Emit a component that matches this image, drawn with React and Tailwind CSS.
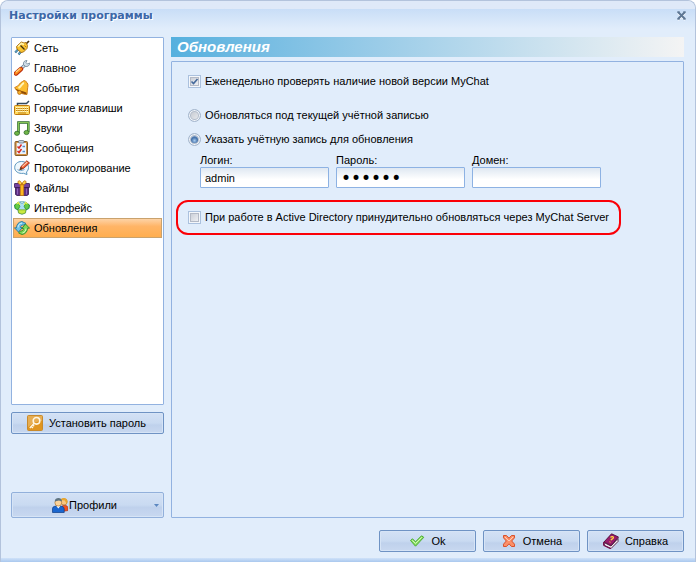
import React, { useState } from 'react';
import clsx from 'clsx';

const NetworkIcon = () => (
  <svg viewBox="0 0 16 16" className="w-4 h-4 shrink-0">
    <path d="M1.200 12.500 4 9.500M4.500 14.500 7 11.500" stroke="#2f6d92" strokeWidth="2.200" />
    <path d="M1.500 12 4 9.500M4.800 14 7 11.500" stroke="#7fc0dd" strokeWidth="0.900" />
    <path d="M11.500 4.500 15 1" stroke="#4a3314" strokeWidth="1.700" />
    <path d="M2.500 6.500 5.500 3.500 7.500 2 10 3 12 2.500 13.500 5.500 13 8.500 9.500 12 7 12.500 3 9Z" fill="#f9c432" stroke="#a1690f" strokeWidth="0.900" />
    <path d="M4 6.500 7.500 3.500 10 4.500" stroke="#fff2b0" strokeWidth="1.600" fill="none" />
    <path d="M6.500 5.500 10.500 9.500" stroke="#3d2b0c" strokeWidth="1.200" />
    <path d="M10.500 5.500 12 7" stroke="#b87712" />
  </svg>
);

const ToolsIcon = () => (
  <svg viewBox="0 0 16 16" className="w-4 h-4 shrink-0">
    <path d="M7 8.500 11 5" stroke="#6f8597" strokeWidth="3" />
    <path d="M7 8.500 11 5" stroke="#dbe7ef" strokeWidth="1.500" />
    <path d="M9.500 4.500C9 2 10.500 .5 13 .5L12 2.500 13.500 4 15.700 3C15.900 5.500 13.500 7.200 11.300 6.300Z" fill="#cfdde8" stroke="#6f8597" strokeWidth="0.800" />
    <path d="M2 13.500 7 9" stroke="#b8290a" strokeWidth="4.400" strokeLinecap="round" />
    <path d="M2 13.200 6.800 8.900" stroke="#fb8a1e" strokeWidth="2.800" strokeLinecap="round" />
    <path d="M2 12 6 8.600" stroke="#ffd98a" strokeWidth="1.100" />
  </svg>
);

const BellIcon = () => (
  <svg viewBox="0 0 16 16" className="w-4 h-4 shrink-0">
    <path d="M.7 7.500C5 6.500 5.500 2.500 8.500 1.500 9.500.3 11.500.3 12 1.700 14 3 14.300 5 13.700 7.500 13 10 13.500 12 13 14.500 9 14.500 2.500 12 .7 7.500Z" fill="#fcbd2f" stroke="#c9740c" strokeWidth="0.900" />
    <path d="M4.500 8C7.500 6.500 7.500 3.700 10 3" stroke="#fff3b8" strokeWidth="2" fill="none" />
    <path d="M1.500 8.800C3 11.500 8 13.800 12.500 14.200L12.300 12.500C9 11 5 10.500 1.500 8.800Z" fill="#8e4a06" />
    <circle cx="5.500" cy="12.500" r="1.900" fill="#f8b02a" stroke="#a35a08" strokeWidth="0.700" />
  </svg>
);

const KeyboardIcon = () => (
  <svg viewBox="0 0 16 16" className="w-4 h-4 shrink-0">
    <path d="M3.500 5V3.500H12.500L15 1" stroke="#33495c" strokeWidth="1.500" fill="none" />
    <rect x="0.500" y="5.500" width="15" height="9" rx="1" fill="#ffd95e" stroke="#c07a0c" />
    <path d="M2 7.500H14M2 9.500H14M2 11.500H14" stroke="#fff8cf" strokeDasharray="1.500 0.700" />
    <path d="M2 8.500H14M2 10.500H14" stroke="#b8760f" strokeWidth="0.900" strokeDasharray="1.500 0.700" />
    <path d="M4 13H12" stroke="#b8760f" strokeWidth="0.900" />
  </svg>
);

const MusicIcon = () => (
  <svg viewBox="0 0 16 16" className="w-4 h-4 shrink-0">
    <path d="M4.500 13V2.500H14.300V12" fill="none" stroke="#2e6a2b" strokeWidth="2.600" />
    <path d="M4.500 13V2.500H14.300V12" fill="none" stroke="#86c655" strokeWidth="1.200" />
    <ellipse cx="3" cy="13.300" rx="2.500" ry="2.100" fill="#6fb545" stroke="#2e6a2b" strokeWidth="0.800" />
    <ellipse cx="12.500" cy="12.500" rx="2.500" ry="2.100" fill="#6fb545" stroke="#2e6a2b" strokeWidth="0.800" />
  </svg>
);

const ClipboardIcon = () => (
  <svg viewBox="0 0 16 16" className="w-4 h-4 shrink-0">
    <rect x="1" y="1.500" width="12.500" height="14" rx="1" fill="#d39447" stroke="#865b28" />
    <rect x="2.700" y="3" width="9.300" height="11" fill="#eaf3ff" />
    <rect x="4.500" y="0.500" width="5.500" height="2.500" rx="1" fill="#c6d2de" stroke="#5c6b7c" strokeWidth="0.700" />
    <path d="M3.500 6.500 5 8 7.500 4.500M3.500 11 5 12.500 7.500 9" stroke="#d82a25" strokeWidth="1.500" fill="none" />
    <path d="M8.500 6.500H11M8.500 11.500H11" stroke="#5b8cc4" strokeWidth="1.300" />
  </svg>
);

const LogIcon = () => (
  <svg viewBox="0 0 16 16" className="w-4 h-4 shrink-0">
    <path d="M7.500 1.500C11.500 1.500 14.500 4 14.500 7.500 14.500 9.500 13.500 11 12.500 12L13 14.500 9.500 13.300C4.500 14 .7 11.500.7 7.500.7 4 3.500 1.500 7.500 1.500Z" fill="#eef7fd" stroke="#5a95bd" />
    <path d="M3.500 9.500C5.500 11 7.500 11 10.500 9.500" stroke="#79aace" fill="none" />
    <path d="M6 9.500 7 6.500 12.800.8 15.500 3 9.500 8.500Z" fill="#ee5a2c" stroke="#8f2310" strokeWidth="0.800" />
    <path d="M8.300 6.600 13.300 2" stroke="#ffd0b0" strokeWidth="1.100" />
    <path d="M5.300 10.300 6.800 7 8.800 8.900Z" fill="#5f4127" />
  </svg>
);

const GiftIcon = () => (
  <svg viewBox="0 0 16 16" className="w-4 h-4 shrink-0">
    <path d="M1.500 7H14.500V14.500L13 15.500H3L1.500 14.500Z" fill="#592b80" stroke="#351650" strokeWidth="0.800" />
    <rect x="0.400" y="3.500" width="15.200" height="4" rx="0.500" fill="#7342a0" stroke="#351650" strokeWidth="0.800" />
    <path d="M3.500 8.500V14.500M12.500 8.500V14.500" stroke="#8e62b8" strokeWidth="1.200" />
    <path d="M6.300 3.500H9.700V15.600H6.300Z" fill="#fdb91f" stroke="#c2720b" strokeWidth="0.600" />
    <path d="M8 4.800C5 4.800 3 2.800 4.500 1 6 .2 7.500 2.200 8 4.800 8.500 2.200 10 .2 11.500 1 13 2.800 11 4.800 8 4.800Z" fill="#ffd94f" stroke="#c2720b" strokeWidth="0.900" />
  </svg>
);

const InterfaceIcon = () => (
  <svg viewBox="0 0 16 16" className="w-4 h-4 shrink-0">
    <path d="M5 2H11L15.500 5 15 8.500 12 10 11.500 13 8 14.200 4.500 13 4 10 1 8.500.5 5Z" fill="#a9ddf4" stroke="#4a97a8" strokeWidth="0.800" strokeLinejoin="round" />
    <path d="M4.500 2.300.6 5 1.200 8.300 4 9.800 5.800 6.500ZM11.500 2.300 15.400 5 14.800 8.300 12 9.800 10.200 6.500Z" fill="#62cb45" stroke="#2b8f2b" strokeWidth="0.800" />
    <path d="M2.500 4 4.500 2.500 6 5M13.500 4 11.500 2.500 10 5" stroke="#e9f052" strokeWidth="1.200" fill="none" />
    <path d="M4.200 9.800H11.800L11.300 13 8 14.100 4.700 13Z" fill="#c9e941" stroke="#6fa320" strokeWidth="0.700" />
    <path d="M6 2C6.500 4 9.500 4 10 2Z" fill="#eaf8ff" stroke="#4a97a8" strokeWidth="0.600" />
  </svg>
);

const RefreshIcon = () => (
  <svg viewBox="0 0 16 16" className="w-4 h-4 shrink-0">
    <path d="M8 1.500 12 3.500 10 5C7.500 4.700 6.500 6 6.500 7.500H8.500L4.500 12 .5 7.800H2.500C2.500 4.500 4.500 2 8 1.500Z" fill="#6fc3ea" stroke="#22779b" strokeWidth="0.900" strokeLinejoin="round" />
    <path d="M8 14.500 4.500 13 6.500 11C8.500 11.300 9.500 10 9.500 8.500H7.800L11.500 4 15.500 8.200H13.500C13.500 11.500 11.500 14 8 14.500Z" fill="#7ed957" stroke="#2b8a2f" strokeWidth="0.900" strokeLinejoin="round" />
    <path d="M4 7.500C4 5 5.500 3.500 8 3" stroke="#d6f1fc" fill="none" />
    <path d="M12 8.500C12 10.800 10.500 12.500 8.500 13" stroke="#dcf8cb" fill="none" />
  </svg>
);

const KeyIcon = () => (
  <svg viewBox="0 0 16 16" className="w-4 h-4 shrink-0">
    <rect x="0.500" y="0.500" width="15" height="15" rx="1" fill="#e0951f" stroke="#c98a2b" />
    <path d="M1 1H15V6C10 6 5 8 1 12Z" fill="#e6ad52" />
    <circle cx="9.500" cy="5.800" r="3.300" fill="none" stroke="#fff6e2" strokeWidth="1.600" />
    <path d="M7.200 8.300 2.800 13M4.300 11.500 6 13M5.800 10 7.200 11.300" stroke="#fff6e2" strokeWidth="1.400" fill="none" />
  </svg>
);

const UsersIcon = () => (
  <svg viewBox="0 0 16 16" className="w-4 h-4 shrink-0">
    <path d="M10 14.500V9C13 7.500 16 8.500 16 11.500V13.500Z" fill="#f2501f" stroke="#a62b0d" strokeWidth="0.600" />
    <circle cx="12" cy="4.800" r="3.200" fill="#f8c782" stroke="#a66a1e" strokeWidth="0.600" />
    <path d="M8.500 3C9 .3 14.800-.2 15.500 4L14.800 7 12.800 3.500Z" fill="#e9a72e" />
    <path d="M.5 15.500V11.500C.5 9.500 3 9 6.300 9S12.200 9.500 12.200 12V15.500Z" fill="#1a66cf" stroke="#0b3c87" strokeWidth="0.700" />
    <path d="M4.300 9 6.300 11.500 8.300 9Z" fill="#fff" />
    <circle cx="6.300" cy="5.700" r="3.400" fill="#fcd49b" stroke="#a66a1e" strokeWidth="0.600" />
    <path d="M2.800 4.500C2.500.2 10-.2 10 4.500L7 3.500Z" fill="#5f7480" />
  </svg>
);

const OkIcon = () => (
  <svg viewBox="0 0 16 16" className="w-4 h-4 shrink-0">
    <path d="M1.500 7.500 3.500 5.800 6.500 8.800 12.500 2.800 14.800 4.300 6.500 13.200Z" fill="#8be062" stroke="#4aab35" strokeLinejoin="round" />
    <path d="M3.300 7.300 6.500 10.500 12.700 4.300" stroke="#d3fab8" fill="none" />
  </svg>
);

const CancelIcon = () => (
  <svg viewBox="0 0 16 16" className="w-4 h-4 shrink-0">
    <path d="M2.500 2.500H5.500L8 5.200 10.500 2.500H13.500V4.800L10.700 8 13.500 11.200V13.500H10.500L8 10.800 5.500 13.500H2.500V11.200L5.300 8 2.500 4.800Z" fill="#fb8f68" stroke="#d9502a" strokeLinejoin="round" />
    <path d="M4 4 8 8 12 4" stroke="#ffcbb2" fill="none" />
  </svg>
);

const BookIcon = () => (
  <svg viewBox="0 0 16 16" className="w-4 h-4 shrink-0">
    <path d="M1 9.500 8 13 15 5.500V8.500L8 15.500 1.500 12.500Z" fill="#f3edf2" stroke="#4d1239" strokeWidth="0.900" />
    <path d="M1 9 8.500 .8 15.500 4 8 12.500Z" fill="#991b6b" stroke="#4f0e39" strokeWidth="0.900" />
    <path d="M1 9C0 11 .5 12.500 2 13L8 15.800" stroke="#75104f" strokeWidth="1.300" fill="none" />
    <path d="M7.500 4.500C8.500 3 11 3.500 10.300 5 9.900 6 8.500 5.700 8 7.300M7.200 8.700 6.800 9.300" stroke="#ffd83f" strokeWidth="1.300" fill="none" />
  </svg>
);

const sections = [
  { id: 'network', label: 'Сеть', Icon: NetworkIcon },
  { id: 'main', label: 'Главное', Icon: ToolsIcon },
  { id: 'events', label: 'События', Icon: BellIcon },
  { id: 'hotkeys', label: 'Горячие клавиши', Icon: KeyboardIcon },
  { id: 'sounds', label: 'Звуки', Icon: MusicIcon },
  { id: 'messages', label: 'Сообщения', Icon: ClipboardIcon },
  { id: 'logging', label: 'Протоколирование', Icon: LogIcon },
  { id: 'files', label: 'Файлы', Icon: GiftIcon },
  { id: 'interface', label: 'Интерфейс', Icon: InterfaceIcon },
  { id: 'updates', label: 'Обновления', Icon: RefreshIcon },
];

const buttonStyle =
  'flex items-center justify-center border rounded-[2px] bg-[linear-gradient(#d3e1f5,#c9daf1_50%,#bfd1ec_60%,#c8d8f0)] shadow-[inset_0_0_0_1px_#d6e4f6]';

const DialogButton = ({ Icon, children }) => (
  <button className={clsx(buttonStyle, 'w-[97px] h-[22px] gap-[6px] border-[#6f93c4]')}>
    <Icon />
    {children}
  </button>
);

const Checkbox = ({ checked, onChange, children }) => (
  <label className="flex items-center gap-1 h-4">
    <span className="relative w-[13px] h-[13px] shrink-0">
      <input
        type="checkbox"
        checked={checked}
        onChange={onChange}
        className="block appearance-none w-[13px] h-[13px] border border-[#abc1de] bg-linear-to-br from-[#c3c8d2] to-[#f7f8fa] shadow-[inset_0_0_0_1px_#f4f7fb,inset_0_0_0_2px_#b4bac6]"
      />
      {checked && (
        <svg viewBox="0 0 13 13" className="absolute inset-0 pointer-events-none">
          <path d="M3.500 6.500 5.500 8.500 9.500 4" stroke="#44699b" strokeWidth="1.600" fill="none" />
        </svg>
      )}
    </span>
    {children}
  </label>
);

const Radio = ({ checked, onChange, children }) => (
  <label className="flex items-center gap-1 h-4">
    <input
      type="radio"
      name="account"
      checked={checked}
      onChange={onChange}
      className={clsx(
        'appearance-none w-[13px] h-[13px] shrink-0 rounded-full border border-[#a3b5cc] shadow-[inset_0_0_0_1px_#f1f5fa,inset_0_0_0_2px_#b3bdcb]',
        checked
          ? 'bg-[radial-gradient(circle_at_50%_60%,#a9cdf0_0,#4673ab_3px,#5f86b8_4px,#d4dfec_5px)]'
          : 'bg-linear-to-br from-[#bfc4cc] to-[#eef0f3]'
      )}
    />
    {children}
  </label>
);

const Field = ({ label, type = 'text', ...props }) => (
  <label className="flex flex-col w-[129px]">
    <span className="h-[13px] leading-[13px]">{label}</span>
    <input
      type={type}
      {...props}
      className={clsx(
        'w-full h-[21px] px-1 border border-[#8db2e3] rounded-[1px] bg-linear-to-b from-[#dfe8f2] to-white to-60% outline-none',
        type === 'password' && "text-[17px] font-['DejaVu_Sans',sans-serif]"
      )}
    />
  </label>
);

const App = () => {
  const [active, setActive] = useState('updates');
  const [weekly, setWeekly] = useState(true);
  const [account, setAccount] = useState('custom');
  const [forced, setForced] = useState(false);

  return (
    <div className="min-h-screen flex flex-col bg-[#e1edfb] border-x border-t border-[#b3c3dc] rounded-t-lg text-[11px] leading-4 text-black font-['Liberation_Sans',Arial,sans-serif]">
      <header className="flex items-center justify-between h-7 px-2 pt-[2px] rounded-t-lg bg-linear-to-b from-[#dfe9f8] from-30% via-[#c9def7] via-30% to-[#e1edfb]">
        <h1 className="font-['DejaVu_Sans',sans-serif] font-bold text-[11px] text-[#3c67a8] [text-shadow:1px_1px_0_#fff]">
          Настройки программы
        </h1>
        <button aria-label="Закрыть" className="w-[10px] h-[10px]">
          <svg viewBox="0 0 10 10">
            <path d="M1 2 8 9M8 2 1 9" stroke="#fff" strokeWidth="2" />
            <path d="M0 1H3M6 1H9M0 8H3M6 8H9" stroke="#5e7794" />
            <path d="M1 1 8 8M8 1 1 8" stroke="#5e7794" strokeWidth="2" />
          </svg>
        </button>
      </header>

      <main className="flex-1 flex gap-[7px] pl-[10px] pr-[11px] pt-2">
        <aside className="flex flex-col w-[153px] shrink-0">
          <nav className="flex-1 mb-[7px] px-px bg-white border border-[#92b2e0] rounded-[1px]">
            {sections.map(({ id, label, Icon }) => (
              <button
                key={id}
                onClick={() => setActive(id)}
                className={clsx(
                  'flex items-center gap-1 w-full h-5 border text-left',
                  active === id
                    ? 'border-[#c9a26d] bg-linear-to-b from-[#fdd3a5] via-[#ffb567] via-40% to-[#ffae4e]'
                    : 'border-transparent'
                )}
              >
                <Icon />
                {label}
              </button>
            ))}
          </nav>
          <button className={clsx(buttonStyle, 'h-[22px] gap-[6px] pr-[2px] border-[#6f93c4]')}>
            <KeyIcon />
            Установить пароль
          </button>
          <button className={clsx(buttonStyle, 'relative mt-[58px] h-[26px] gap-px pr-[6px] border-[#92b0db]')}>
            <UsersIcon />
            Профили
            <svg viewBox="0 0 5 3" className="absolute right-1 w-[5px] h-[3px]">
              <path d="M0 0H5L2.500 3Z" fill="#5b87c0" />
            </svg>
          </button>
        </aside>

        <section className="flex-1 flex flex-col">
          <h2 className="h-5 px-[6px] leading-5 text-[15px] font-bold italic text-white bg-linear-to-r from-[#55b0de] to-[#f4f4f4]">
            Обновления
          </h2>
          <div className="flex-1 mt-1 px-4 pt-[11px] border border-[#92b2e0] rounded-[1px]">
            <Checkbox checked={weekly} onChange={() => setWeekly(!weekly)}>
              Еженедельно проверять наличие новой версии MyChat
            </Checkbox>
            <div className="flex flex-col gap-2 mt-[18px]">
              <Radio checked={account === 'current'} onChange={() => setAccount('current')}>
                Обновляться под текущей учётной записью
              </Radio>
              <Radio checked={account === 'custom'} onChange={() => setAccount('custom')}>
                Указать учётную запись для обновления
              </Radio>
            </div>
            <div className="flex gap-[7px] mt-[7px] ml-3">
              <Field label="Логин:" defaultValue="admin" />
              <Field label="Пароль:" type="password" defaultValue="secret" />
              <Field label="Домен:" />
            </div>
            <div className="w-fit h-[35px] -ml-3 mt-3 px-[10px] pt-[7px] border-2 border-[#fb0007] rounded-xl">
              <Checkbox checked={forced} onChange={() => setForced(!forced)}>
                При работе в Active Directory принудительно обновляться через MyChat Server
              </Checkbox>
            </div>
          </div>
        </section>
      </main>

      <footer className="flex justify-end gap-[7px] pl-[10px] pr-[11px] pt-3 pb-[6px]">
        <DialogButton Icon={OkIcon}>Ok</DialogButton>
        <DialogButton Icon={CancelIcon}>Отмена</DialogButton>
        <DialogButton Icon={BookIcon}>Справка</DialogButton>
      </footer>
      <div className="h-1 bg-linear-to-b from-[#cfe2f9] to-[#a9c8ee]" />
    </div>
  );
};

export default App;
